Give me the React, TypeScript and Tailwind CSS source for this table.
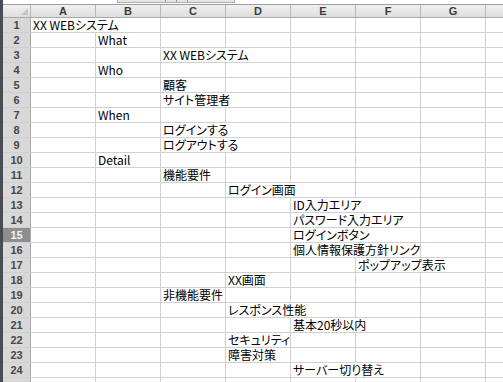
import React from "react";

type Cell = { c: number; t: string; s: number };

const data: Record<number, Cell> = {
  1: { c: 0, t: "XX WEBシステム", s: 2 },
  2: { c: 1, t: "What", s: 1 },
  3: { c: 2, t: "XX WEBシステム", s: 2 },
  4: { c: 1, t: "Who", s: 1 },
  5: { c: 2, t: "顧客", s: 1 },
  6: { c: 2, t: "サイト管理者", s: 2 },
  7: { c: 1, t: "When", s: 1 },
  8: { c: 2, t: "ログインする", s: 2 },
  9: { c: 2, t: "ログアウトする", s: 2 },
  10: { c: 1, t: "Detail", s: 1 },
  11: { c: 2, t: "機能要件", s: 1 },
  12: { c: 3, t: "ログイン画面", s: 2 },
  13: { c: 4, t: "ID入力エリア", s: 2 },
  14: { c: 4, t: "パスワード入力エリア", s: 2 },
  15: { c: 4, t: "ログインボタン", s: 2 },
  16: { c: 4, t: "個人情報保護方針リンク", s: 2 },
  17: { c: 5, t: "ポップアップ表示", s: 2 },
  18: { c: 3, t: "XX画面", s: 1 },
  19: { c: 2, t: "非機能要件", s: 1 },
  20: { c: 3, t: "レスポンス性能", s: 2 },
  21: { c: 4, t: "基本20秒以内", s: 2 },
  22: { c: 3, t: "セキュリティ", s: 1 },
  23: { c: 3, t: "障害対策", s: 1 },
  24: { c: 4, t: "サーバー切り替え", s: 2 },
};

const spanW: Record<number, string> = {
  1: "w-[65px]",
  2: "w-[130px]",
  3: "w-[195px]",
};

const cols = ["A", "B", "C", "D", "E", "F", "G"];

const cellFont =
  "font-['Noto_Sans_CJK_JP',sans-serif] text-[12px] leading-[14px] [font-feature-settings:'palt'] text-black";
const hdrFont =
  "font-['Liberation_Sans',Arial,sans-serif] font-bold text-[11px] leading-[12px]";

function Row({ n }: { n: number }) {
  const d = data[n];
  const cells: React.ReactNode[] = [];
  let i = 0;
  while (i < 7) {
    if (d && d.c === i) {
      cells.push(
        <div
          key={i}
          className={`${spanW[d.s]} h-full shrink-0 border-r border-[#d0d0d0] flex items-center pl-[2px] whitespace-nowrap overflow-visible ${cellFont}`}
        >
          {d.t}
        </div>
      );
      i += d.s;
    } else {
      cells.push(
        <div key={i} className="w-[65px] h-full shrink-0 border-r border-[#d0d0d0]" />
      );
      i += 1;
    }
  }
  const sel = n === 15;
  return (
    <div className="flex h-[15px] shrink-0 border-b border-[#d0d0d0]">
      <div
        className={`w-[28px] h-full shrink-0 flex items-center justify-center border-r border-[#a8a8a8] ${hdrFont} ${
          sel ? "bg-[#8e8e8e] text-[#f2f2f2]" : "bg-[#d8d8d8] text-[#474747]"
        }`}
      >
        {n}
      </div>
      {cells}
      <div className="flex-1 h-full" />
    </div>
  );
}

export default function App() {
  const rows = Array.from({ length: 24 }, (_, k) => k + 1);
  return (
    <div className="w-[503px] h-[382px] overflow-hidden flex bg-white">
      <div className="w-[3px] h-full shrink-0 bg-[#4a4c54]" />
      <div className="flex-1 flex flex-col min-w-0">
        <div className="h-[5px] shrink-0 border-b border-[#9e9e9e] bg-white flex">
          <div className="ml-[114px] w-[118px] h-[3px] bg-[#e4e4e4] border-x border-b border-[#b0b0b0] flex justify-center gap-[10px]">
            <div className="w-px h-full bg-[#9a9a9a]" />
            <div className="w-px h-full bg-[#9a9a9a]" />
            <div className="w-px h-full bg-[#9a9a9a]" />
          </div>
        </div>
        <div className="h-[13px] shrink-0 flex border-b border-[#a8a8a8] bg-gradient-to-b from-[#f0f0f0] to-[#dedede]">
          <div className="w-[28px] h-full shrink-0 border-r border-[#b8b8b8] relative">
            <div className="absolute right-[2px] bottom-[2px] w-0 h-0 border-l-[7px] border-l-transparent border-b-[7px] border-b-[#c4c4c4]" />
          </div>
          {cols.map((c) => (
            <div
              key={c}
              className={`w-[65px] h-full shrink-0 border-r border-[#b8b8b8] flex items-center justify-center text-[#3c3c3c] ${hdrFont}`}
            >
              {c}
            </div>
          ))}
          <div className="flex-1 h-full" />
        </div>
        {rows.map((n) => (
          <Row key={n} n={n} />
        ))}
        <div className="flex h-[15px] shrink-0">
          <div className={`w-[28px] h-full shrink-0 flex items-center justify-center border-r border-[#a8a8a8] bg-[#d8d8d8] text-[#474747] ${hdrFont}`}>
            25
          </div>
          {cols.map((c) => (
            <div key={c} className="w-[65px] h-full shrink-0 border-r border-[#d0d0d0]" />
          ))}
        </div>
      </div>
    </div>
  );
}
